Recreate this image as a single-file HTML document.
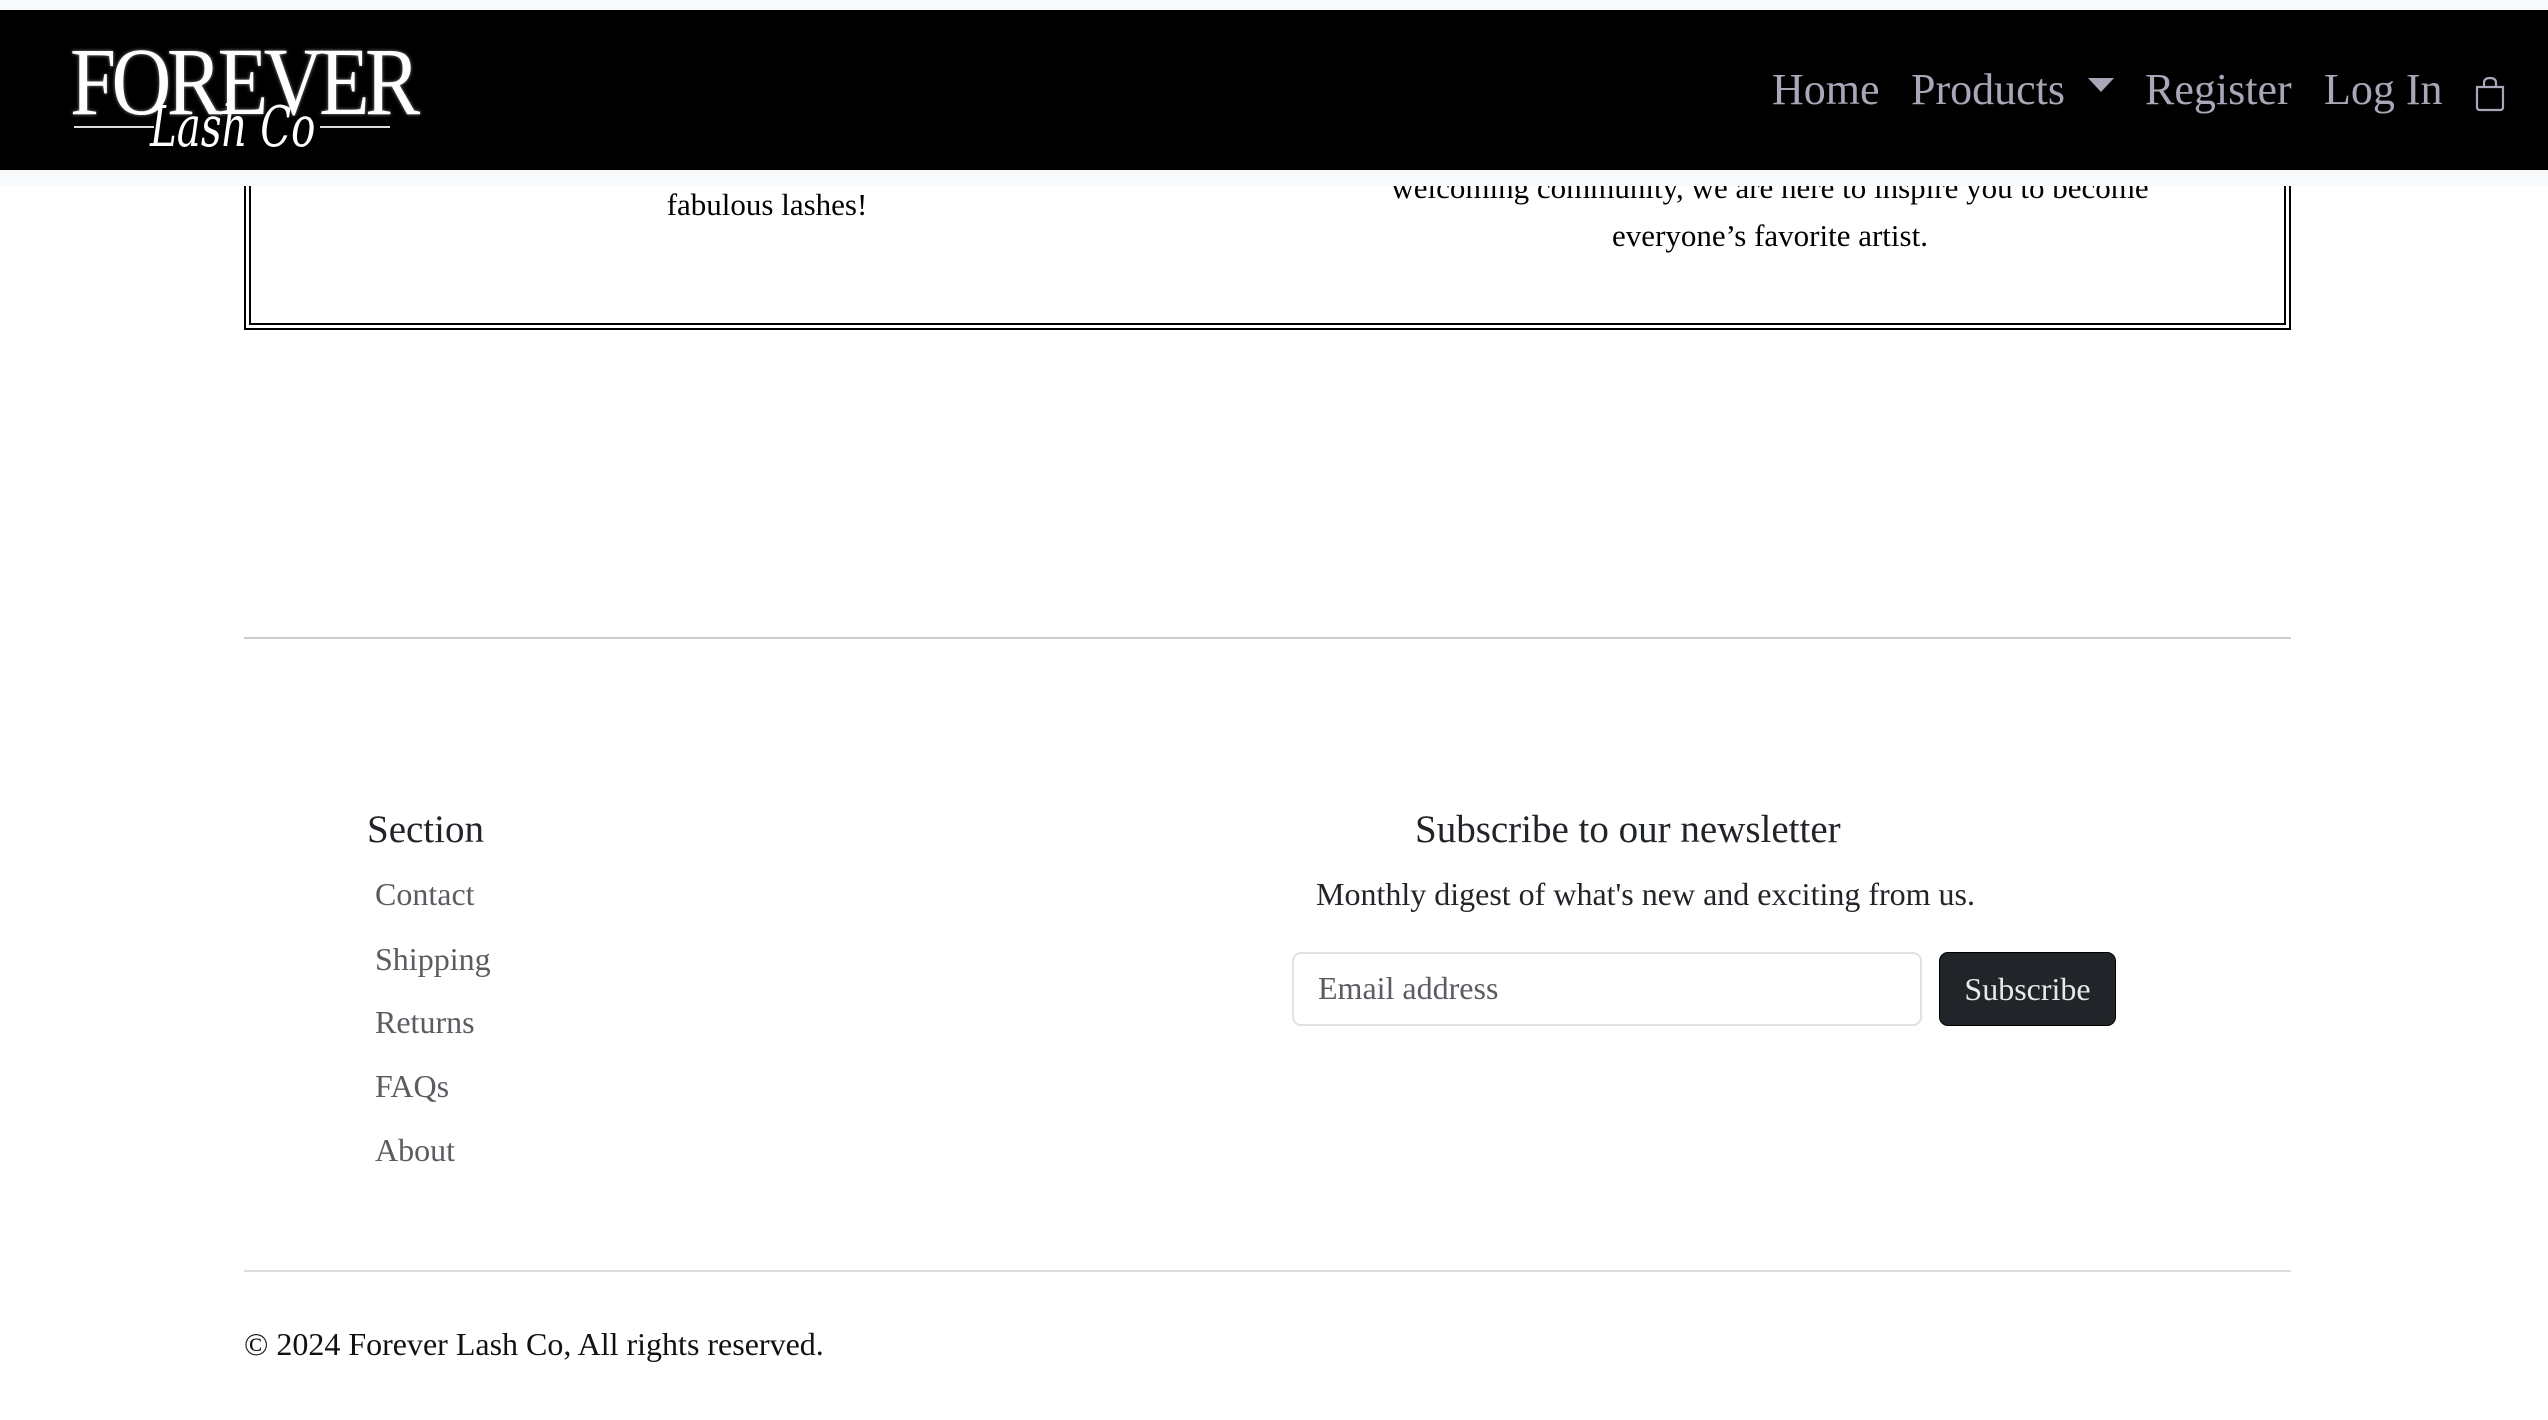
<!DOCTYPE html>
<html><head><meta charset="utf-8"><style>
html,body{margin:0;padding:0;}
body{width:2548px;height:1420px;position:relative;overflow:hidden;background:#fff;font-family:"Liberation Serif",serif;color:#000;}
.a{position:absolute;white-space:nowrap;}
.nav{position:absolute;left:0;top:0;width:2548px;height:186px;background:#f8f9fa;z-index:5;}
.navin{position:absolute;left:0;top:10px;width:2548px;height:160px;background:#000;}
.nl{position:absolute;top:50px;font-size:44px;line-height:60px;color:#a9a6b8;}
.box{position:absolute;left:244px;top:100px;width:2033px;height:216px;border:7px double #000;}
.c{text-align:center;font-size:31px;line-height:49px;}
.lk{position:absolute;left:375px;font-size:32px;line-height:44px;color:#595c60;}
</style></head><body>
<div class="box"></div>
<div class="a c" style="left:467px;width:600px;top:180px;">fabulous lashes!</div>
<div class="a c" style="left:1370px;width:800px;top:163px;">welcoming community, we are here to inspire you to become</div>
<div class="a c" style="left:1370px;width:800px;top:211px;">everyone’s favorite artist.</div>

<div class="nav"><div class="navin">
  <div class="a" style="left:70px;top:22px;width:330px;height:130px;">
    <div class="a" style="left:0;top:0;font-size:92px;line-height:94px;color:#fff;letter-spacing:-5px;transform:scale(0.9,1.05);transform-origin:left top;text-shadow:0 0 4px #888;">FOREVER</div>
    <div class="a" style="left:4px;top:94px;width:80px;height:2px;background:#ddd;"></div>
    <div class="a" style="left:250px;top:94px;width:70px;height:2px;background:#ddd;"></div>
    <div class="a" style="left:80px;top:66px;font-size:56px;line-height:60px;color:#fff;font-style:italic;font-family:'DejaVu Serif',serif;transform:scaleX(0.72);transform-origin:left;">Lash Co</div>
  </div>
  <div class="nl" style="left:1772px;">Home</div>
  <div class="nl" style="left:1911px;">Products</div>
  <svg class="a" style="left:2088px;top:68px;" width="26" height="16"><polygon points="0,0 26,0 13,14" fill="#a9a6b8"/></svg>
  <div class="nl" style="left:2145px;">Register</div>
  <div class="nl" style="left:2324px;">Log In</div>
  <svg class="a" style="left:2474px;top:66px;" width="32" height="36" viewBox="0 0 32 36"><path d="M3 11 H29 V31 Q29 34 26 34 H6 Q3 34 3 31 Z" fill="none" stroke="#a9a6b8" stroke-width="2.2"/><path d="M10 11 V7 Q10 2 16 2 Q22 2 22 7 V11" fill="none" stroke="#a9a6b8" stroke-width="2.2"/></svg>
</div></div>

<div class="a" style="left:244px;top:637px;width:2047px;height:2px;background:#ccc;"></div>

<div class="a" style="left:367px;top:806px;font-size:39px;line-height:48px;color:#212529;">Section</div>
<div class="lk" style="top:872px;">Contact</div>
<div class="lk" style="top:937px;">Shipping</div>
<div class="lk" style="top:1000px;">Returns</div>
<div class="lk" style="top:1064px;">FAQs</div>
<div class="lk" style="top:1128px;">About</div>

<div class="a" style="left:1415px;top:806px;font-size:39px;line-height:48px;color:#212529;">Subscribe to our newsletter</div>
<div class="a" style="left:1316px;top:872px;font-size:32px;line-height:44px;color:#212529;">Monthly digest of what's new and exciting from us.</div>
<div class="a" style="left:1292px;top:952px;width:626px;height:70px;border:2px solid #dee2e6;border-radius:9px;"></div>
<div class="a" style="left:1318px;top:966px;font-size:32px;line-height:44px;color:#595c60;">Email address</div>
<div class="a" style="left:1939px;top:952px;width:177px;height:74px;background:#212529;border:1px solid #000;border-radius:9px;box-sizing:border-box;color:#e8e8e8;font-size:32px;line-height:72px;text-align:center;">Subscribe</div>

<div class="a" style="left:244px;top:1270px;width:2047px;height:2px;background:#ddd;"></div>
<div class="a" style="left:244px;top:1322px;font-size:32px;line-height:44px;color:#111;">© 2024 Forever Lash Co, All rights reserved.</div>
</body></html>
